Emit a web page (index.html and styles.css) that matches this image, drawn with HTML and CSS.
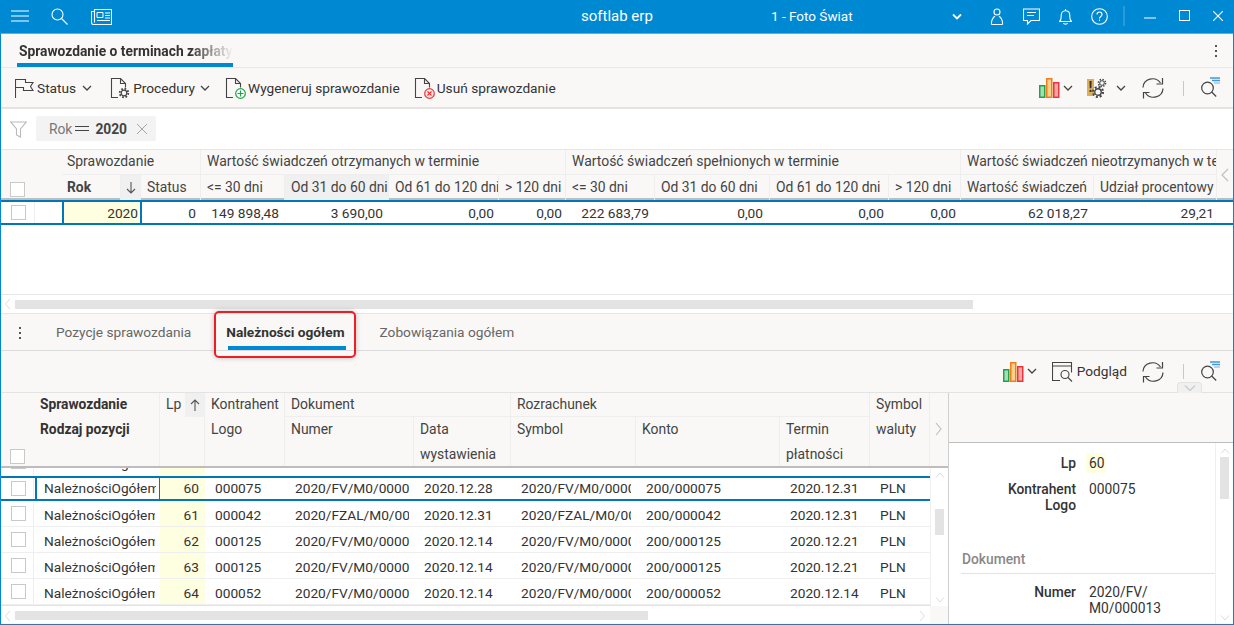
FILE: index.html
```html
<!DOCTYPE html>
<html lang="pl">
<head>
<meta charset="utf-8">
<title>softlab erp</title>
<link rel="stylesheet" href="styles.css">
</head>
<body>
<svg class="defs" width="0" height="0">
  <symbol id="chev" viewBox="0 0 10 6"><path d="M1 1l4 4 4-4" fill="none" stroke="#444" stroke-width="1.3"/></symbol>
  <symbol id="bars" viewBox="0 0 21 20">
    <rect x=".75" y="7.75" width="5" height="11.5" fill="#a8dcb4" stroke="#1fa34a" stroke-width="1.5"/>
    <rect x="7.75" y=".75" width="5" height="18.5" fill="#fbd089" stroke="#ef7d22" stroke-width="1.5"/>
    <rect x="14.75" y="4.75" width="5" height="14.5" fill="#f7a6a6" stroke="#e8383d" stroke-width="1.5"/>
  </symbol>
  <symbol id="refresh" viewBox="0 0 22 22">
    <path d="M1 10.5A9.5 9 0 0 1 18.5 6M21 11.5A9.5 9 0 0 1 3.500 16" fill="none" stroke="#444" stroke-width="1.2"/>
    <path d="M20.500 1v6h-6M1.500 21.500v-6h6" fill="none" stroke="#444" stroke-width="1.2"/>
  </symbol>
  <symbol id="finder" viewBox="0 0 20 20">
    <circle cx="7.500" cy="11" r="5.800" fill="none" stroke="#444" stroke-width="1.200"/>
    <path d="M11.700 15l4.500 4.500" stroke="#444" stroke-width="1.200"/>
    <path d="M10 1h10" stroke="#3f9ad8" stroke-width="1.500"/><path d="M12 3.500h8" stroke="#3f9ad8" stroke-width="1.500"/><path d="M14 6h6" stroke="#9cccec" stroke-width="1.500"/>
  </symbol>
  <symbol id="doc" viewBox="0 0 20 20">
    <path d="M8 19.500H1.500V.5h9l5 5v4M10.500.5v5h5" fill="none" stroke="#444" stroke-width="1.100"/>
  </symbol>
  <symbol id="gear" viewBox="0 0 12 12">
    <circle cx="6" cy="6" r="2.800" fill="none" stroke="#444" stroke-width="1.200"/>
    <circle cx="6" cy="6" r="4.300" fill="none" stroke="#444" stroke-width="1.800" stroke-dasharray="1.700 1.670"/>
  </symbol>
</svg>
<div class="window">
  <header class="titlebar">
    <svg class="tb-burger" width="18" height="12" viewBox="0 0 18 12"><path d="M0 1h18M0 6h18M0 11h18" stroke="#fff" stroke-width="1"/></svg>
    <svg class="tb-search" width="17" height="17" viewBox="0 0 17 17"><circle cx="6.500" cy="6.500" r="5.500" fill="none" stroke="#fff" stroke-width="1.100"/><path d="M10.500 10.500l6 6" stroke="#fff" stroke-width="1.100"/></svg>
    <svg class="tb-news" width="21" height="17" viewBox="0 0 21 17"><path d="M3.500 1.500h17v15H2.500a2 2 0 0 1-2-2V3.500h3zM3.500 3.500v11" fill="none" stroke="#fff" stroke-width="1.100"/><path d="M6 4.500h6v5H6z" fill="none" stroke="#fff"/><path d="M14 5h5M14 7.500h5M14 10h5M6 12.500h13" stroke="#fff"/></svg>
    <span class="tb-app">softlab erp</span>
    <span class="tb-company">1 - Foto Świat</span>
    <svg class="tb-chev" width="10" height="7" viewBox="0 0 10 7"><path d="M1 1.500l4 4 4-4" fill="none" stroke="#fff" stroke-width="1.800"/></svg>
    <svg class="tb-user" width="14" height="17" viewBox="0 0 14 17"><circle cx="7" cy="4" r="3" fill="none" stroke="#fff" stroke-width="1.100"/><path d="M1.500 16.500c-.5-4.500 2-7.500 3.500-8.200M12.500 16.500c.5-4.500-2-7.500-3.500-8.200M1.500 16.500h11" fill="none" stroke="#fff" stroke-width="1.100"/></svg>
    <svg class="tb-chat" width="17" height="17" viewBox="0 0 17 17"><path d="M.5 1h16v11.500H8l-3.500 3.500v-3.500h-4z" fill="none" stroke="#fff" stroke-width="1.100"/><path d="M4 4.500h9M4 7.500h7" stroke="#fff"/></svg>
    <svg class="tb-bell" width="13" height="17" viewBox="0 0 13 17"><path d="M.5 13.500c2-1.500 1.700-4 1.700-6 0-2.700 1.700-4.700 4.300-4.700s4.300 2 4.300 4.700c0 2-.3 4.500 1.700 6zM6.500 1v1.800M4.500 15c.3 1.500 3.700 1.500 4 0" fill="none" stroke="#fff" stroke-width="1.100"/></svg>
    <svg class="tb-help" width="17" height="17" viewBox="0 0 17 17"><circle cx="8.500" cy="8.500" r="7.800" fill="none" stroke="#fff" stroke-width="1.100"/><path d="M6 6.500c0-3.300 5-3.300 5 0 0 2-2.500 2-2.500 4" fill="none" stroke="#fff" stroke-width="1.100"/><path d="M8.500 11.500v1.500" stroke="#fff" stroke-width="1.100"/></svg>
    <span class="tb-sep"></span>
    <svg class="tb-min" width="12" height="2" viewBox="0 0 12 2"><path d="M0 1h12" stroke="#fff"/></svg>
    <svg class="tb-max" width="11" height="11" viewBox="0 0 11 11"><rect x=".5" y=".5" width="10" height="10" fill="none" stroke="#fff"/></svg>
    <svg class="tb-close" width="10" height="10" viewBox="0 0 10 10"><path d="M0 0l10 10M10 0L0 10" stroke="#fff" stroke-width="1.100"/></svg>
  </header>

  <div class="tabstrip">
    <div class="doc-tab"><span class="doc-tab-text">Sprawozdanie o terminach zapłaty</span></div>
    <span class="kebab kebab-right"><i></i><i></i><i></i></span>
  </div>

  <div class="toolbar toolbar-main">
    <svg class="ti-flag" width="19" height="20" viewBox="0 0 19 20"><path d="M.5 20V1.500h10v3h7.500l-2.500 4 2.500 4H8.500v-3H.5" fill="none" stroke="#444" stroke-width="1.100"/></svg>
    <span class="tool-label t-status">Status</span>
    <svg class="chev c-status" width="10" height="6"><use href="#chev"/></svg>
    <span class="icon-doc i-proc"><svg width="20" height="20"><use href="#doc"/></svg><svg class="badge-gear" width="12" height="12"><use href="#gear"/></svg></span>
    <span class="tool-label t-proc">Procedury</span>
    <svg class="chev c-proc" width="10" height="6"><use href="#chev"/></svg>
    <span class="icon-doc i-gen"><svg width="20" height="20"><use href="#doc"/></svg><svg class="badge" width="11" height="11" viewBox="0 0 11 11"><circle cx="5.500" cy="5.500" r="4.800" fill="#fff" stroke="#1fa34a" stroke-width="1.200"/><path d="M5.500 2.500v6M2.500 5.500h6" stroke="#1fa34a" stroke-width="1.200"/></svg></span>
    <span class="tool-label t-gen">Wygeneruj sprawozdanie</span>
    <span class="icon-doc i-del"><svg width="20" height="20"><use href="#doc"/></svg><svg class="badge" width="11" height="11" viewBox="0 0 11 11"><circle cx="5.500" cy="5.500" r="4.800" fill="#fde3e3" stroke="#e8383d" stroke-width="1.200"/><path d="M3.500 3.500l4 4M7.500 3.500l-4 4" stroke="#e8383d" stroke-width="1.200"/></svg></span>
    <span class="tool-label t-del">Usuń sprawozdanie</span>
    <span class="toolbar-fill"></span>
    <svg width="21" height="20"><use href="#bars"/></svg>
    <svg class="chev c-bars" width="10" height="6"><use href="#chev"/></svg>
    <span class="icon-warn"><span class="warn-flag">!</span><svg class="warn-g1" width="10" height="10"><use href="#gear"/></svg><svg class="warn-g2" width="14" height="14"><use href="#gear"/></svg></span>
    <svg class="chev c-warn" width="10" height="6"><use href="#chev"/></svg>
    <svg class="i-refresh" width="22" height="22"><use href="#refresh"/></svg>
    <span class="tool-sep"></span>
    <svg class="i-finder" width="20" height="20"><use href="#finder"/></svg>
  </div>

  <div class="filterbar">
    <svg class="funnel" width="17" height="17" viewBox="0 0 17 17"><path d="M.8 1h15.400l-5.700 7v8l-4-2V8z" fill="none" stroke="#b9b9b9" stroke-width="1.100"/></svg>
    <div class="chip">
      <span class="chip-key">Rok</span>
      <span class="chip-eq"></span>
      <span class="chip-val">2020</span>
      <svg class="chip-x" width="10" height="10" viewBox="0 0 10 10"><path d="M0 0l10 10M10 0L0 10" stroke="#a5a5a5"/></svg>
    </div>
  </div>

  <section class="top-grid">
    <div class="top-head">
      <div class="th th-box tc-a"><span class="check"></span></div>
      <div class="th tc-b"></div>
      <div class="th th-group tc-g1">Sprawozdanie</div>
      <div class="th th-group tc-g2">Wartość świadczeń otrzymanych w terminie</div>
      <div class="th th-group tc-g3">Wartość świadczeń spełnionych w terminie</div>
      <div class="th th-group tc-g4">Wartość świadczeń nieotrzymanych w terminie</div>
      <div class="th th-chev tc-end"><svg width="8" height="14" viewBox="0 0 8 14"><path d="M7 1L1 7l6 6" fill="none" stroke="#bdbdbd" stroke-width="1.100"/></svg></div>
      <div class="th th-strong">Rok</div>
      <div class="th th-sort"><svg width="10" height="12" viewBox="0 0 10 12"><path d="M5 0v11M1 7l4 4 4-4" fill="none" stroke="#555" stroke-width="1.100"/></svg></div>
      <div class="th">Status</div>
      <div class="th">&lt;= 30 dni</div>
      <div class="th th-hover">Od 31 do 60 dni</div>
      <div class="th">Od 61 do 120 dni</div>
      <div class="th">&gt; 120 dni</div>
      <div class="th">&lt;= 30 dni</div>
      <div class="th">Od 31 do 60 dni</div>
      <div class="th">Od 61 do 120 dni</div>
      <div class="th">&gt; 120 dni</div>
      <div class="th">Wartość świadczeń</div>
      <div class="th">Udział procentowy</div>
    </div>
    <div class="top-row">
      <div class="td td-box"><span class="check"></span></div>
      <div class="td"></div>
      <div class="td td-num td-current">2020</div>
      <div class="td td-num">0</div>
      <div class="td td-num pr6">149 898,48</div>
      <div class="td td-num pr6">3 690,00</div>
      <div class="td td-num">0,00</div>
      <div class="td td-num pr4">0,00</div>
      <div class="td td-num pr6">222 683,79</div>
      <div class="td td-num pr7">0,00</div>
      <div class="td td-num">0,00</div>
      <div class="td td-num">0,00</div>
      <div class="td td-num pr6">62 018,27</div>
      <div class="td td-num pr3">29,21</div>
    </div>
    <div class="top-blank"></div>
    <div class="hscroll hscroll-top">
      <svg class="sc-left" width="6" height="10" viewBox="0 0 6 10"><path d="M5 0L0.500 5 5 10" fill="none" stroke="#dcdcdc"/></svg>
      <span class="sc-thumb sc-thumb-top"></span>
    </div>
  </section>

  <nav class="tabs2">
    <span class="kebab kebab-left"><i></i><i></i><i></i></span>
    <span class="tab2 tab2-a">Pozycje sprawozdania</span>
    <span class="tab2 tab2-b">Należności ogółem</span>
    <span class="tab2 tab2-c">Zobowiązania ogółem</span>
    <span class="callout"></span>
  </nav>

  <div class="toolbar toolbar-sub">
    <span class="toolbar-fill"></span>
    <svg width="21" height="20"><use href="#bars"/></svg>
    <svg class="chev c-bars" width="10" height="6"><use href="#chev"/></svg>
    <svg class="i-preview" width="21" height="20" viewBox="0 0 21 20"><path d="M8 18.500H.5V.5h19v10M.5 4h19" fill="none" stroke="#444" stroke-width="1.100"/><circle cx="13" cy="12.500" r="4" fill="none" stroke="#444" stroke-width="1.100"/><path d="M16 15.500l4 4" stroke="#444" stroke-width="1.100"/></svg>
    <span class="tool-label t-prev">Podgląd</span>
    <svg class="i-refresh r-sub" width="22" height="22"><use href="#refresh"/></svg>
    <span class="tool-sep"></span>
    <svg class="i-finder" width="20" height="20"><use href="#finder"/></svg>
    <span class="collapse"><svg width="12" height="6" viewBox="0 0 12 6"><path d="M1 .5l5 5 5-5" fill="none" stroke="#aaa"/></svg></span>
  </div>

  <section class="lower">
    <div class="lower-main">
      <div class="low-head">
        <div class="lh lh-check"><span class="check"></span></div>
        <div class="lh lh-two lh-bold lh-sp">Sprawozdanie<br>Rodzaj pozycji</div>
        <div class="lh lh-two lh-lp">Lp</div>
        <div class="lh lh-sort"><svg width="10" height="12" viewBox="0 0 10 12"><path d="M5 12V1M1 5l4-4 4 4" fill="none" stroke="#555" stroke-width="1.100"/></svg></div>
        <div class="lh lh-under"></div>
        <div class="lh lh-two lh-kon">Kontrahent<br>Logo</div>
        <div class="lh lh-dok">Dokument</div>
        <div class="lh lh-roz">Rozrachunek</div>
        <div class="lh lh-two lh-sym">Symbol<br>waluty</div>
        <div class="lh lh-two lh-arrow"><svg width="7" height="14" viewBox="0 0 7 14"><path d="M1 1l5 6-5 6" fill="none" stroke="#bdbdbd" stroke-width="1.100"/></svg></div>
        <div class="lh lh-c6">Numer</div>
        <div class="lh lh-c7">Data<br>wystawienia</div>
        <div class="lh lh-c8">Symbol</div>
        <div class="lh lh-c9">Konto</div>
        <div class="lh lh-c10">Termin<br>płatności</div>
      </div>
      <div class="low-body">
        <div class="low-rows">
          <div class="lr lr-partial">
            <div class="ld ld-box"><span class="check"></span></div><div class="ld ld-text"><span class="clip">NależnościOgółem</span></div><div class="ld ld-lp"></div>
          </div>
          <div class="lr lr-selected">
            <div class="ld ld-box"><span class="check"></span></div><div class="ld ld-text ld-current"><span class="clip">NależnościOgółem</span></div><div class="ld ld-lp">60</div><div class="ld ld-c">000075</div><div class="ld ld-c">2020/FV/M0/000013</div><div class="ld ld-c">2020.12.28</div><div class="ld ld-c">2020/FV/M0/000013</div><div class="ld ld-c">200/000075</div><div class="ld ld-c">2020.12.31</div><div class="ld ld-c">PLN</div>
          </div>
          <div class="lr">
            <div class="ld ld-box"><span class="check"></span></div><div class="ld ld-text"><span class="clip">NależnościOgółem</span></div><div class="ld ld-lp">61</div><div class="ld ld-c">000042</div><div class="ld ld-c">2020/FZAL/M0/000001</div><div class="ld ld-c">2020.12.31</div><div class="ld ld-c">2020/FZAL/M0/000001</div><div class="ld ld-c">200/000042</div><div class="ld ld-c">2020.12.31</div><div class="ld ld-c">PLN</div>
          </div>
          <div class="lr">
            <div class="ld ld-box"><span class="check"></span></div><div class="ld ld-text"><span class="clip">NależnościOgółem</span></div><div class="ld ld-lp">62</div><div class="ld ld-c">000125</div><div class="ld ld-c">2020/FV/M0/000014</div><div class="ld ld-c">2020.12.14</div><div class="ld ld-c">2020/FV/M0/000014</div><div class="ld ld-c">200/000125</div><div class="ld ld-c">2020.12.21</div><div class="ld ld-c">PLN</div>
          </div>
          <div class="lr">
            <div class="ld ld-box"><span class="check"></span></div><div class="ld ld-text"><span class="clip">NależnościOgółem</span></div><div class="ld ld-lp">63</div><div class="ld ld-c">000125</div><div class="ld ld-c">2020/FV/M0/000015</div><div class="ld ld-c">2020.12.14</div><div class="ld ld-c">2020/FV/M0/000015</div><div class="ld ld-c">200/000125</div><div class="ld ld-c">2020.12.21</div><div class="ld ld-c">PLN</div>
          </div>
          <div class="lr">
            <div class="ld ld-box"><span class="check"></span></div><div class="ld ld-text"><span class="clip">NależnościOgółem</span></div><div class="ld ld-lp">64</div><div class="ld ld-c">000052</div><div class="ld ld-c">2020/FV/M0/000016</div><div class="ld ld-c">2020.12.14</div><div class="ld ld-c">2020/FV/M0/000016</div><div class="ld ld-c">200/000052</div><div class="ld ld-c">2020.12.14</div><div class="ld ld-c">PLN</div>
          </div>
          <div class="lr-tail"></div>
        </div>
        <div class="vscroll vscroll-low">
          <svg width="10" height="6" viewBox="0 0 10 6"><path d="M1 5.500l4-4.500 4 4.500" fill="none" stroke="#dcdcdc"/></svg>
          <span class="vs-thumb vs-thumb-low"></span>
          <svg class="vs-down" width="10" height="6" viewBox="0 0 10 6"><path d="M1 .5l4 4.500 4-4.500" fill="none" stroke="#dcdcdc"/></svg>
        </div>
      </div>
      <div class="hscroll hscroll-low">
        <svg class="sc-left" width="6" height="10" viewBox="0 0 6 10"><path d="M5 0L0.500 5 5 10" fill="none" stroke="#dcdcdc"/></svg>
        <span class="sc-thumb sc-thumb-low"></span>
        <svg class="sc-right" width="6" height="10" viewBox="0 0 6 10"><path d="M1 0l4.500 5L1 10" fill="none" stroke="#dcdcdc"/></svg>
        <span class="sc-corner"></span>
      </div>
    </div>
    <aside class="detail">
      <div class="detail-head"></div>
      <div class="detail-body">
        <div class="detail-content">
          <div class="field field-lp"><span class="f-label">Lp</span><span class="f-value f-hl">60</span></div>
          <div class="field field-kon"><span class="f-label">Kontrahent<br>Logo</span><span class="f-value">000075</span></div>
          <h3 class="f-section">Dokument</h3>
          <div class="field"><span class="f-label">Numer</span><span class="f-value">2020/FV/<br>M0/000013</span></div>
        </div>
        <div class="vscroll vscroll-detail">
          <svg width="10" height="6" viewBox="0 0 10 6"><path d="M1 5.500l4-4.500 4 4.500" fill="none" stroke="#dcdcdc"/></svg>
          <span class="vs-thumb vs-thumb-detail"></span>
          <svg class="vs-down" width="10" height="6" viewBox="0 0 10 6"><path d="M1 .5l4 4.500 4-4.500" fill="none" stroke="#dcdcdc"/></svg>
        </div>
      </div>
    </aside>
  </section>
</div>
</body>
</html>
```
FILE: styles.css
```css
* { box-sizing: border-box; }
html, body { margin: 0; padding: 0; height: 100%; overflow: hidden; background: #fff; }
body { font: 13.800px/20px Roboto, "Liberation Sans", sans-serif; color: #333; }
.defs { position: absolute; }
svg { display: block; flex: none; }

.window { width: 1234px; height: 625px; border: solid #0089d3; border-width: 0 1px 1px; display: flex; flex-direction: column; overflow: hidden; }

/* title bar */
.titlebar { height: 34px; flex: none; margin: 0 -1px; background: #0089d3; border-bottom: 1px solid #55b2e4; display: flex; align-items: center; color: #fff; padding-bottom: 1px; }
.tb-burger { margin-left: 11px; }
.tb-search { margin-left: 22px; }
.tb-news { margin-left: 23px; }
.tb-app { margin-left: 469px; width: 72px; font-size: 15px; white-space: nowrap; }
.tb-company { margin-left: 118px; width: 82px; font-size: 13.500px; white-space: nowrap; }
.tb-chev { margin-left: 99px; }
.tb-user { margin-left: 28px; }
.tb-chat { margin-left: 19px; }
.tb-bell { margin-left: 19px; }
.tb-help { margin-left: 19px; }
.tb-sep { margin-left: 15px; width: 2px; height: 20px; background: #2a9bd9; }
.tb-min { margin-left: 19px; margin-top: 3px; }
.tb-max { margin-left: 23px; margin-top: -2px; }
.tb-close { margin-left: 23px; }

/* document tab */
.tabstrip { height: 34px; flex: none; background: #f9f8f6; border-bottom: 1px solid #e8e8e8; display: flex; align-items: stretch; justify-content: space-between; }
.doc-tab { margin-left: 16px; width: 216px; border-bottom: 4px solid #0089d3; padding: 7px 0 0 2px; overflow: hidden; }
.doc-tab-text { display: block; font-size: 13.800px; font-weight: 700; white-space: nowrap; overflow: hidden; color: #333; -webkit-mask-image: linear-gradient(to right, #000 80%, transparent 100%); mask-image: linear-gradient(to right, #000 80%, transparent 100%); }
.kebab { display: flex; flex-direction: column; gap: 3px; align-items: center; width: 3px; }
.kebab i { width: 2px; height: 2px; background: #555; display: block; }
.kebab-right { margin: 11px 16px 0 0; }
.kebab-left { margin: 13px 0 0 17px; }

/* toolbars */
.toolbar { flex: none; background: #f9f8f6; display: flex; align-items: center; position: relative; }
.toolbar-main { height: 41px; border-bottom: 2px solid #e3e3e3; padding: 1px 13px 0 14px; }
.toolbar-sub { height: 42px; border-bottom: 1px solid #e3e3e3; padding: 0 13px 0 14px; }
.toolbar-fill { flex: 1; }
.tool-label { white-space: nowrap; font-size: 13.700px; }
.t-status { margin-left: 3px; }
.chev { margin-top: -1px; }
.c-status { margin-left: 6px; }
.i-proc { margin-left: 18px; }
.t-proc { margin-left: 3px; }
.c-proc { margin-left: 5px; }
.i-gen { margin-left: 15px; }
.t-gen { margin-left: 3px; }
.i-del { margin-left: 14px; }
.t-del { margin-left: 3px; }
.icon-doc { position: relative; width: 20px; height: 20px; display: block; }
.badge { position: absolute; right: -1px; bottom: -1px; }
.badge-gear { position: absolute; right: 0; bottom: -1px; }
.c-bars { margin-left: 3px; }
.icon-warn { position: relative; width: 20px; height: 20px; margin-left: 14px; }
.warn-flag { position: absolute; left: 0; top: 1px; width: 7px; height: 17px; background: #dcae58; color: #333; font: 700 14px/16px Roboto, sans-serif; text-align: center; }
.warn-g1 { position: absolute; right: 0; top: 0; }
.warn-g2 { position: absolute; left: 4px; bottom: -1px; }
.c-warn { margin-left: 9px; }
.i-refresh { margin-left: 16px; }
.r-sub { margin-left: 15px; }
.tool-sep { width: 1px; height: 15px; background: #c8c8c8; margin-left: 19px; }
.i-finder { margin-left: 16px; margin-top: -2px; }
.i-preview { margin-left: 15px; }
.t-prev { margin-left: 4px; margin-top: -1px; }
.collapse { position: absolute; right: 31px; bottom: -1px; width: 25px; height: 11px; background: #f0f0f0; border: 1px solid #e3e3e3; border-bottom: 0; border-radius: 4px 4px 0 0; display: flex; align-items: center; justify-content: center; }

/* filter row */
.filterbar { height: 41px; flex: none; background: #fff; border-bottom: 1px solid #e6e6e6; display: flex; align-items: center; padding: 0 0 0 9px; }
.chip { margin-left: 9px; width: 120px; height: 25px; margin-top: -1px; background: #f3f3f3; border-radius: 2px; display: flex; align-items: center; padding-left: 13px; }
.chip-key { color: #777; }
.chip-eq { width: 14px; height: 5px; margin-left: 3px; border: solid #444; border-width: 1.500px 0; }
.chip-val { font-weight: 700; color: #444; margin-left: 6px; }
.chip-x { margin-left: 10px; }

/* upper grid */
.top-grid { height: 163px; flex: none; display: flex; flex-direction: column; background: #fff; }
.top-head, .top-row { display: grid; grid-template-columns: 34px 27px 59px 20px 60px 84px 104px 110px 67px 89px 115px 119px 72px 133px 123px 16px; }
.top-head { grid-template-rows: 24px 26px; height: 50px; background: #f9f8f6; border-bottom: 2px solid #bdbdbd; flex: none; }
.th { padding: 0 0 2px 6px; border-right: 1px solid #eeeeee; border-top: 1px solid #eeeeee; white-space: nowrap; overflow: hidden; display: flex; align-items: center; color: #444; font-size: 13.850px; }
.th-box { grid-row: 1 / 3; padding: 0 0 3px 9px; align-items: flex-end; border: 0; }
.tc-a { grid-column: 1; }
.tc-b { grid-column: 2; grid-row: 1 / 3; border: 0; }
.th-group { border-top: 0; padding-left: 6px; font-size: 13.950px; }
.tc-g1 { grid-column: 3 / 6; padding-left: 5px; }
.tc-g2 { grid-column: 6 / 10; }
.tc-g3 { grid-column: 10 / 14; }
.tc-g4 { grid-column: 14 / 16; }
.tc-end { grid-column: 16; grid-row: 1 / 3; border: 0; justify-content: center; padding: 0; }
.th-strong { font-weight: 700; padding-left: 5px; }
.th-sort { background: #f0f0f0; justify-content: center; padding: 0; }
.th-hover { background: #f0f0f0; }
.top-row { height: 25px; flex: none; border: solid #0077b8; border-width: 2px 0; }
.td { padding: 1px 5px 0 0; line-height: 20px; white-space: nowrap; }
.top-row > .td-num:nth-child(3) { grid-column: 3 / 5; }
.top-row > .td:nth-child(1) { border-right: 1px solid #eee; }
.td-num { text-align: right; font-size: 13.700px; }
.pr3 { padding-right: 3px; }
.pr4 { padding-right: 4px; }
.pr6 { padding-right: 6px; }
.pr7 { padding-right: 7px; }
.td-box { padding: 3px 0 0 10px; }
.td-current { background: #fefee0; border: solid #0077b8; border-width: 0 2px; padding-right: 2px; margin-right: -1px; }
.top-blank { flex: 1; border-bottom: 1px solid #e6e6e6; }
.check { display: block; width: 15px; height: 15px; background: #fff; border: 1px solid #c9c9c9; }

.hscroll { flex: none; display: flex; align-items: center; background: #fff; position: relative; }
.hscroll-top { height: 18px; padding-left: 4px; }
.sc-thumb { display: block; height: 9px; background: #e3e3e3; }
.sc-left { margin-right: 4px; }
.sc-thumb-top { width: 958px; }

/* second tabs */
.tabs2 { height: 38px; flex: none; background: #f9f8f6; border-top: 1px solid #e6e6e6; border-bottom: 1px solid #dcdcdc; position: relative; z-index: 1; display: flex; align-items: stretch; }
.tab2 { font-size: 13.700px; color: #666; padding-top: 8px; white-space: nowrap; }
.tab2-a { margin-left: 35px; }
.tab2-b { margin-left: 35px; color: #333; font-weight: 700; position: relative; }
.tab2-b::after { content: ""; position: absolute; left: 2px; right: -1px; bottom: 0; height: 4px; background: #0089d3; }
.tab2-c { margin-left: 35px; }
.callout { position: absolute; left: 213px; top: -3px; width: 142px; height: 47px; border: 2px solid #ee1c25; border-radius: 5px; box-shadow: 0 0 5px rgba(0, 0, 0, .25); }

/* lower panes */
.lower { flex: 1; min-height: 0; display: flex; background: #fff; }
.lower-main { width: 947px; flex: none; display: flex; flex-direction: column; }
.low-head { height: 75px; flex: none; background: #f9f8f6; border-bottom: 2px solid #bdbdbd; display: grid; grid-template-columns: 33px 126px 25px 20px 80px 129px 97px 125px 144px 90px 60px 18px; grid-template-rows: 24px 49px; font-size: 13.900px; line-height: 25px; color: #444; }
.lh { padding-left: 6px; border-right: 1px solid #eee; white-space: nowrap; overflow: hidden; }
.lh-two, .lh-dok, .lh-roz { margin-top: -1px; }
.lh-two { grid-row: 1 / 3; }
.lh-check { grid-row: 1 / 3; grid-column: 1; border: 0; padding: 56px 0 0 9px; }
.lh-bold { font-weight: 700; color: #333; font-size: 13.800px; }
.lh-sp { grid-column: 2; }
.lh-lp { grid-column: 3; border: 0; }
.lh-sort { grid-column: 4; grid-row: 1; padding: 0; background: #f0f0f0; display: flex; align-items: center; justify-content: center; }
.lh-under { grid-column: 4; grid-row: 2; padding: 0; }
.lh-kon { grid-column: 5; }
.lh-dok { grid-column: 6 / 8; grid-row: 1; border-bottom: 1px solid #eee; }
.lh-roz { grid-column: 8 / 11; grid-row: 1; border-bottom: 1px solid #eee; }
.lh-sym { grid-column: 11; }
.lh-arrow { grid-column: 12; border: 0; padding: 30px 0 0 5px; }
.lh-c6 { grid-column: 6; grid-row: 2; }
.lh-c7 { grid-column: 7; grid-row: 2; }
.lh-c8 { grid-column: 8; grid-row: 2; }
.lh-c9 { grid-column: 9; grid-row: 2; }
.lh-c10 { grid-column: 10; grid-row: 2; }

.low-body { flex: 1; min-height: 0; display: flex; }
.low-rows { width: 929px; flex: none; display: flex; flex-direction: column; overflow: hidden; }
.lr { height: 26px; flex: none; display: grid; grid-template-columns: 33px 126px 45px 80px 129px 97px 125px 144px 90px 60px; border-bottom: 1px solid #efefef; align-items: stretch; font-size: 13.700px; }
.lr .ld { padding-top: 2px; }
.lr .ld-box { padding-top: 0; }
.lr-selected .ld { padding-top: 0; padding-bottom: 1px; }
.lr-selected { height: 25px; border: solid #0077b8; border-width: 2px 0; }
.ld { padding-left: 10px; border-right: 5px solid transparent; display: flex; align-items: center; white-space: nowrap; overflow: hidden; }
.ld-box { padding-left: 10px; border-right: 1px solid #efefef; }
.ld-text { padding-left: 10px; border-right: 0; padding-right: 5px; }
.clip { display: block; overflow: hidden; }
.ld-lp { background: #fefee0; justify-content: flex-end; border-right: 6px solid transparent; padding-left: 0; }
.ld-current { border: solid #0077b8; border-width: 0 2px; padding-left: 7px; padding-right: 3px; margin: 0 -1px 0 1px; }
.lr-partial { height: 8px; border-bottom: 0; overflow: hidden; display: grid; }
.lr-partial .ld { display: block; height: 8px; padding-top: 0; }
.lr-partial .check { margin-top: -14px; }
.lr-partial .clip { margin-top: -15px; height: 20px; }
.lr-tail { flex: 1; border-bottom: 1px solid #e3e3e3; }

.vscroll { flex: none; width: 18px; display: flex; flex-direction: column; align-items: center; background: #fff; border-left: 1px solid #efefef; position: relative; }
.vscroll-low { padding-top: 4px; }
.vs-thumb { display: block; width: 9px; background: #e3e3e3; position: absolute; }
.vs-thumb-low { top: 41px; height: 26px; }
.vs-down { position: absolute; bottom: 3px; }

.hscroll-low { height: 18px; padding: 1px 0 0 4px; }
.sc-thumb-low { width: 633px; }
.sc-right { margin-left: 271px; }
.sc-corner { position: absolute; right: 0; top: 0; bottom: 0; width: 18px; background: #f9f8f6; }

/* detail pane */
.detail { flex: 1; min-width: 0; display: flex; flex-direction: column; border-left: 1px solid #cfcfcf; }
.detail-head { height: 50px; flex: none; background: #f9f8f6; border-bottom: 1px solid #bdbdbd; }
.detail-body { flex: 1; min-height: 0; display: flex; overflow: hidden; }
.detail-content { flex: 1; min-width: 0; padding: 10px 0 0 12px; overflow: hidden; }
.field { display: flex; align-items: flex-start; line-height: 16px; }
.f-label { width: 115px; flex: none; text-align: right; font-weight: 500; color: #333; }
.f-value { margin-left: 13px; }
.f-hl { background: #fefee0; padding: 2px 1px 2px 3px; margin-left: 10px; line-height: 16px; }
.field-lp .f-label { padding-top: 2px; }
.field-kon { margin-top: 8px; }
.f-section { margin: 38px 0 10px; padding: 0 0 6px 1px; border-bottom: 1px solid #e3e3e3; font-size: 13.800px; line-height: 16px; font-weight: 500; color: #888; }
.vscroll-detail { padding-top: 5px; }
.vs-thumb-detail { top: 14px; height: 42px; }
```
